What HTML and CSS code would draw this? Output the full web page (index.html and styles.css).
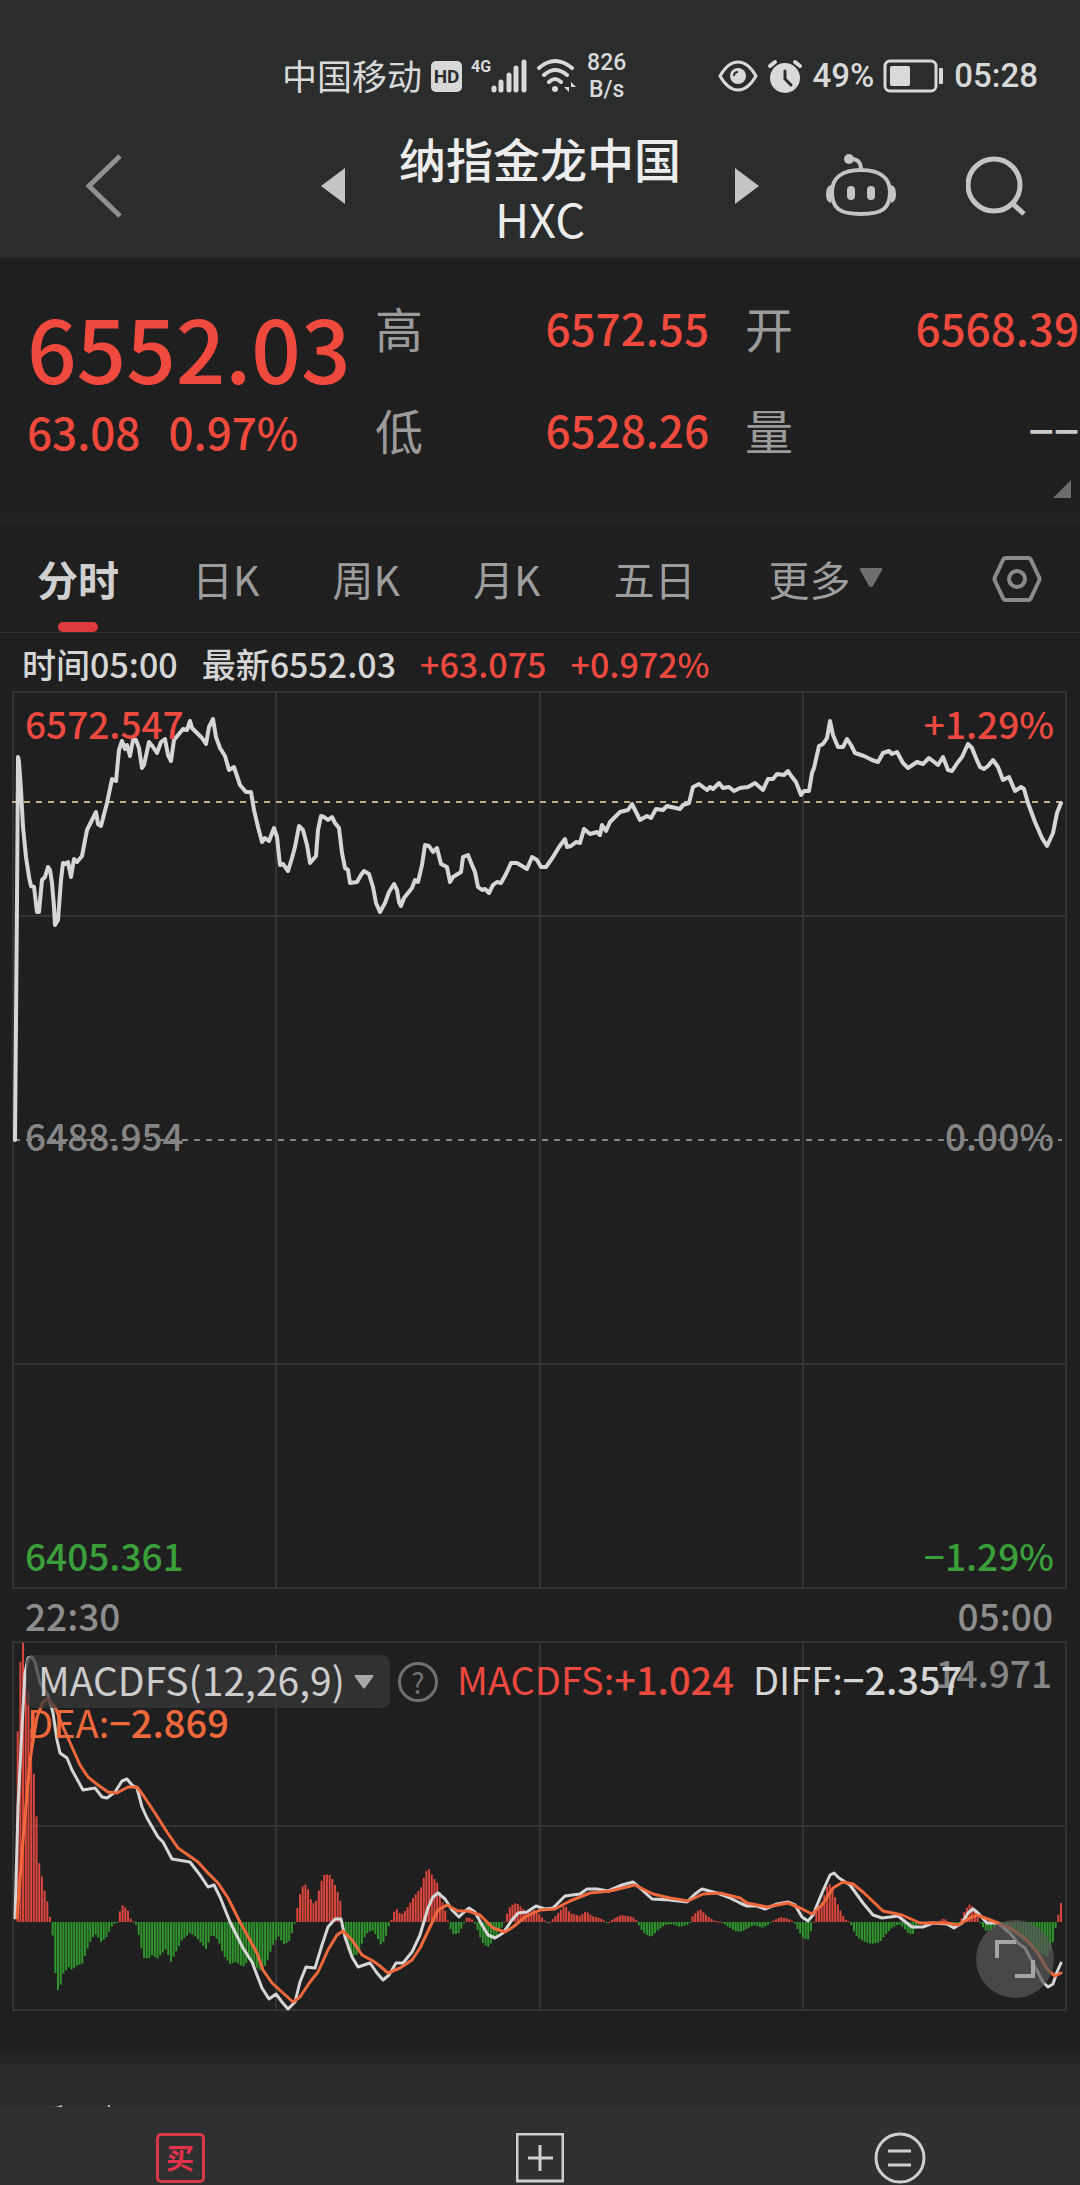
FILE: index.html
```html
<!DOCTYPE html>
<html lang="zh-CN">
<head>
  <meta charset="UTF-8">
  <meta name="viewport" content="width=device-width, initial-scale=1.0">
  <title>纳指金龙中国 HXC</title>
  <link rel="stylesheet" href="styles.css">
</head>
<body>
  <header class="top">
    <div class="status">
      <div class="status-group">
        <span class="carrier">中国移动</span>
        <span class="hd">HD</span>
        <span class="signal">
          <span class="net">4G</span>
          <svg width="36" height="34" viewBox="0 0 36 34" fill="none" stroke="#d8dad9" stroke-width="5" stroke-linecap="round">
            <path d="M3 29v2M10 23v8M18 16v15M25 9v22M33 3v28"/>
          </svg>
        </span>
        <svg width="42" height="36" viewBox="0 0 42 36" fill="none" stroke="#d8dad9" stroke-width="4" stroke-linecap="round">
          <path d="M3 10Q19 -4 36 10M8 17Q19 7 31 17M13 24Q19 18 25 24"/>
          <circle cx="19" cy="31" r="3" fill="#d8dad9" stroke="none"/>
          <path d="M33 24v10l-5-5h5M35 34V24l5 5h-5" fill="#d8dad9" stroke="none"/>
        </svg>
        <span class="speed">826<br>B/s</span>
      </div>
      <div class="status-group">
        <svg width="40" height="32" viewBox="0 0 40 32" fill="none" stroke="#d8dad9" stroke-width="3">
          <path d="M2 16Q10 2 20 2T38 16Q30 30 20 30T2 16Z"/>
          <circle cx="20" cy="16" r="8" fill="#d8dad9" stroke="none"/>
          <path d="M16 16q0-4 4-4" stroke="#2b2d2c" stroke-width="2"/>
        </svg>
        <svg width="36" height="34" viewBox="0 0 36 34" fill="none" stroke-linecap="round">
          <circle cx="18" cy="19" r="15" fill="#d8dad9"/>
          <path d="M3 7l5-4M33 7l-5-4" stroke="#d8dad9" stroke-width="4"/>
          <path d="M18 12v8l6 6" stroke="#2b2d2c" stroke-width="3"/>
        </svg>
        <span class="clock">49%</span>
        <svg width="62" height="34" viewBox="0 0 62 34">
          <rect x="2" y="2" width="51" height="30" rx="5" fill="none" stroke="#d8dad9" stroke-width="3"/>
          <rect x="7" y="7" width="20" height="20" rx="2" fill="#d8dad9"/>
          <rect x="56" y="9" width="4" height="16" rx="1" fill="#d8dad9"/>
        </svg>
        <span class="clock">05:28</span>
      </div>
    </div>

    <nav class="nav">
      <button class="icon-btn back" aria-label="返回">
        <svg width="38" height="64" viewBox="0 0 38 64" fill="none" stroke="#8f9090" stroke-width="5">
          <path d="M35 2L4 32L35 62"/>
        </svg>
      </button>
      <div class="switcher">
        <button class="icon-btn" aria-label="上一个">
          <svg width="24" height="36" viewBox="0 0 24 36"><path d="M24 0v36L0 18z" fill="#c3c5c4"/></svg>
        </button>
        <h1 class="title">纳指金龙中国<span>HXC</span></h1>
        <button class="icon-btn" aria-label="下一个">
          <svg width="24" height="36" viewBox="0 0 24 36"><path d="M0 0v36L24 18z" fill="#c3c5c4"/></svg>
        </button>
      </div>
      <div class="actions">
        <button class="icon-btn" aria-label="助手">
          <svg width="70" height="64" viewBox="0 0 70 64" fill="none" stroke="#c3c5c4" stroke-width="4">
            <path d="M35 16C54 16 64 24 64 38C64 54 57 60 35 60C13 60 6 54 6 38C6 24 16 16 35 16Z"/>
            <path d="M24 5Q35 4 35 16"/>
            <circle cx="23" cy="5" r="5" fill="#c3c5c4" stroke="none"/>
            <path d="M5 31Q0 32 0 40T5 49ZM65 31Q70 32 70 40T65 49Z" fill="#c3c5c4" stroke="none"/>
            <path d="M25 36v6M45 36v6" stroke-width="8" stroke-linecap="round"/>
          </svg>
        </button>
        <button class="icon-btn" aria-label="搜索">
          <svg width="60" height="60" viewBox="0 0 60 60" fill="none" stroke="#c3c5c4" stroke-width="5">
            <circle cx="28" cy="29" r="26"/>
            <path d="M47 48l11 10"/>
          </svg>
        </button>
      </div>
    </nav>
  </header>

  <section class="quote">
    <div class="price">
      <strong>6552.03</strong>
      <p><span>63.08</span><span>0.97%</span></p>
    </div>
    <dl class="stats">
      <div><dt>高</dt><dd>6572.55</dd></div>
      <div><dt>开</dt><dd>6568.39</dd></div>
      <div><dt>低</dt><dd>6528.26</dd></div>
      <div><dt>量</dt><dd class="empty">−−</dd></div>
    </dl>
    <span class="corner"></span>
  </section>

  <main class="board">
    <nav class="tabs">
      <button class="tab active">分时</button>
      <button class="tab">日K</button>
      <button class="tab">周K</button>
      <button class="tab">月K</button>
      <button class="tab">五日</button>
      <button class="tab more">更多<svg width="24" height="20" viewBox="0 0 24 20"><path d="M2 0h20q2 0 1 2L14 18q-2 2-4 0L1 2q-1-2 1-2z" fill="#6f6f6f"/></svg></button>
      <button class="icon-btn setting" aria-label="设置">
        <svg width="50" height="48" viewBox="0 0 50 48" fill="none" stroke="#8b8b8b" stroke-width="4" stroke-linejoin="round">
          <path d="M14 3h22q2 0 3 2l8 17q1 2 0 4l-8 17q-1 2-3 2H14q-2 0-3-2L3 26q-1-2 0-4L11 5q1-2 3-2z"/>
          <circle cx="25" cy="24" r="8"/>
        </svg>
      </button>
    </nav>

    <p class="info">
      <span>时间05:00</span><span>最新6552.03</span><span class="up">+63.075</span><span class="up">+0.972%</span>
    </p>

    <div class="chart">
      <svg id="priceChart" viewBox="0 690 1080 900">
        <g class="grid">
          <path d="M13 692H1066V1588H13ZM13 916H1066M13 1364H1066M276 692V1588M540 692V1588M803 692V1588"/>
        </g>
        <path class="dash-mid" d="M14 1140H1062"/>
        <path class="dash-last" d="M12 802H1062"/>
      </svg>
      <span class="label top-left up">6572.547</span>
      <span class="label top-right up">+1.29%</span>
      <span class="label mid-left">6488.954</span>
      <span class="label mid-right">0.00%</span>
      <span class="label bottom-left down">6405.361</span>
      <span class="label bottom-right down">−1.29%</span>
    </div>

    <div class="times"><span>22:30</span><span>05:00</span></div>

    <div class="chart">
      <svg id="macdChart" viewBox="0 1640 1080 372">
        <g class="grid">
          <path d="M13 1642H1066V2010H13ZM13 1826H1066M276 1642V2010M540 1642V2010M803 1642V2010"/>
        </g>
      </svg>
      <span class="label max">14.971</span>
      <div class="legend">
        <label class="picker">
          <select aria-label="指标"><option>MACDFS(12,26,9)</option></select>
          <svg width="20" height="14" viewBox="0 0 20 14"><path d="M1 0h18q1 0 0 2l-8 11q-1 1-2 0L1 2q-1-2 0-2z" fill="#a8a8a8"/></svg>
        </label>
        <button class="help" aria-label="说明">?</button>
        <span class="value up">MACDFS:<b>+1.024</b></span>
        <span class="value">DIFF:<b>−2.357</b></span>
      </div>
      <span class="dea">DEA:<b>−2.869</b></span>
      <button class="expand" aria-label="全屏">
        <svg width="42" height="42" viewBox="0 0 42 42" fill="none" stroke="#a5a5a5" stroke-width="4">
          <path d="M3 20V4H22M39 22V38H21"/>
        </svg>
      </button>
    </div>
  </main>

  <section class="next-card"></section>

  <footer class="bottom">
    <svg class="peek" width="60" height="3" viewBox="0 0 60 3"><path d="M1 2l4-1 3-1v2zM54 0h2v2h-2z" fill="#bbb"/></svg>
    <button class="icon-btn" aria-label="买"><span class="buy">买</span></button>
    <button class="icon-btn" aria-label="添加">
      <svg width="48" height="50" viewBox="0 0 48 50" fill="none" stroke="#cfcfcf" stroke-width="3">
        <rect x="1" y="1" width="46" height="47"/><path d="M12 25h25M24 12v26"/>
      </svg>
    </button>
    <button class="icon-btn" aria-label="菜单">
      <svg width="52" height="52" viewBox="0 0 52 52" fill="none" stroke="#cfcfcf" stroke-width="3">
        <circle cx="26" cy="26" r="24"/><path d="M14 19h23M14 33h23"/>
      </svg>
    </button>
  </footer>

  <script src="script.js"></script>
</body>
</html>
```

FILE: styles.css
```css
* {
  box-sizing: border-box;
}
body {
  margin: 0;
  background: #1f1f1f;
  color: #d6d6d6;
  font-family: "Noto Sans CJK SC", "Noto Sans", sans-serif;
}
h1, p, dl, dd {
  margin: 0;
}
button, select {
  font-family: inherit;
  color: inherit;
  background: none;
  border: none;
  padding: 0;
  cursor: pointer;
}
b {
  font-weight: 500;
}
svg {
  display: block;
}
.icon-btn {
  display: flex;
  align-items: center;
  justify-content: center;
}
.up {
  color: #ec4a40;
}
.down {
  color: #3a9f3a;
}

/* status bar + title */
.top {
  background: #2b2d2c;
}
.status {
  display: flex;
  justify-content: space-between;
  padding: 44px 42px 0 282px;
  color: #d8dad9;
}
.status-group {
  display: flex;
  align-items: center;
  gap: 9px;
  height: 64px;
}
.carrier {
  font-size: 35px;
  line-height: 60px;
  padding-bottom: 3px;
}
.hd {
  width: 31px;
  height: 31px;
  border-radius: 5px;
  background: #d8dad9;
  color: #2b2d2c;
  font: bold 19px/31px Roboto, sans-serif;
  text-align: center;
}
.signal {
  display: flex;
  align-items: flex-start;
}
.net {
  font: bold 16px/16px Roboto, sans-serif;
}
.speed {
  font: 500 23px/27px Roboto, sans-serif;
  text-align: center;
}
.clock {
  font: 500 33px/40px Roboto, sans-serif;
}
.nav {
  display: grid;
  grid-template-columns: 1fr auto 1fr;
  align-items: center;
  height: 150px;
  padding: 6px 54px 0;
}
.back {
  justify-self: start;
  margin-left: 31px;
}
.switcher {
  display: flex;
  align-items: center;
  gap: 54px;
}
.title {
  padding-top: 4px;
  font-size: 47px;
  font-weight: 500;
  line-height: 60px;
  text-align: center;
  color: #ecedec;
}
.title span {
  display: block;
  font-weight: 400;
}
.actions {
  display: flex;
  align-items: center;
  justify-content: flex-end;
  gap: 70px;
}

/* quote */
.quote {
  position: relative;
  display: flex;
  height: 268px;
  padding: 39px 1px 0 27px;
  border-bottom: 13px solid #232323;
}
.price {
  width: 348px;
  color: #f04a3e;
}
.price strong {
  display: block;
  font-size: 87px;
  font-weight: 500;
  line-height: 98px;
}
.price p {
  display: flex;
  gap: 28px;
  padding-top: 4px;
  font-size: 44px;
  font-weight: 500;
  line-height: 64px;
}
.stats {
  flex: 1;
  display: grid;
  grid-template-columns: 1fr 1fr;
  align-content: start;
  gap: 42px 36px;
  font-size: 44px;
  line-height: 60px;
}
.stats div {
  display: flex;
  justify-content: space-between;
}
.stats dt {
  font-size: 48px;
  color: #9b9b9b;
}
.stats dd {
  font-weight: 500;
  color: #f04a3e;
}
.stats .empty {
  color: #c8c8c8;
}
.corner {
  position: absolute;
  right: 9px;
  bottom: 15px;
  border-left: 18px solid transparent;
  border-bottom: 18px solid #6d6d6d;
}

/* tabs */
.tabs {
  display: flex;
  gap: 73px;
  height: 107px;
  padding: 0 38px 0 37px;
  border-bottom: 1px solid #333;
}
.tab {
  position: relative;
  padding-bottom: 2px;
  font-size: 41px;
  color: #9d9d9d;
}
.tab.active {
  color: #d0d0d0;
  font-weight: bold;
}
.tab.active::after {
  content: "";
  position: absolute;
  left: 50%;
  bottom: 0;
  width: 40px;
  height: 10px;
  margin-left: -20px;
  border-radius: 5px;
  background: #dd3a3d;
}
.more {
  display: flex;
  align-items: center;
  gap: 8px;
}
.setting {
  margin-left: auto;
}
.info {
  display: flex;
  gap: 24px;
  height: 57px;
  padding: 1px 22px 0;
  font-size: 34px;
  font-weight: 500;
  line-height: 60px;
}

/* charts */
.chart {
  position: relative;
}
.chart svg {
  width: 100%;
}
.grid path {
  fill: none;
  stroke: #333;
  stroke-width: 2;
}
.dash-mid, .dash-last {
  stroke: #858585;
  stroke-width: 2;
  stroke-dasharray: 6 6;
}
.dash-last {
  stroke: #c4ad86;
}
.line {
  fill: none;
  stroke: #d6d6d6;
  stroke-width: 4;
  stroke-linejoin: round;
  stroke-linecap: round;
}
.line.thin {
  stroke-width: 3;
}
.line.orange {
  stroke: #f0693c;
}
.bar-up {
  fill: #dc463d;
}
.bar-down {
  fill: #2f952c;
}
.label, .times {
  font-size: 37px;
  font-weight: 500;
  line-height: 44px;
}
.label {
  position: absolute;
}
.top-left, .mid-left, .bottom-left {
  left: 25px;
}
.top-right, .mid-right, .bottom-right {
  right: 26px;
}
.top-left, .top-right {
  top: 11px;
}
.mid-left, .mid-right {
  top: 423px;
  color: #858585;
}
.bottom-left, .bottom-right {
  bottom: 13px;
}
.times {
  display: flex;
  justify-content: space-between;
  height: 50px;
  padding: 3px 27px 0 25px;
  color: #8d8d8d;
}
.max {
  top: 10px;
  right: 28px;
  color: #858585;
}
.legend {
  position: absolute;
  top: 14px;
  left: 26px;
  display: flex;
  align-items: center;
  font-size: 38px;
  line-height: 50px;
  white-space: nowrap;
}
.value {
  padding-bottom: 5px;
  margin-left: 19px;
}
.picker {
  display: flex;
  align-items: center;
  padding: 0 16px 0 12px;
  border-radius: 8px;
  background: rgba(56, 56, 56, 0.75);
}
.picker select {
  appearance: none;
  height: 53px;
  padding-bottom: 4px;
  font-size: 39px;
  line-height: 49px;
  color: #cccccc;
}
.picker svg {
  width: 20px;
  margin-left: 9px;
}
.help {
  width: 40px;
  height: 40px;
  margin-left: 8px;
  border: 3px solid #707070;
  border-radius: 50%;
  font-size: 28px;
  line-height: 32px;
  color: #707070;
}
.dea {
  position: absolute;
  top: 57px;
  left: 27px;
  font-size: 38px;
  line-height: 50px;
  color: #f0693c;
}
.expand {
  position: absolute;
  right: 26px;
  bottom: 14px;
  display: flex;
  align-items: center;
  justify-content: center;
  width: 78px;
  height: 78px;
  border-radius: 50%;
  background: rgba(88, 88, 88, 0.7);
}
.expand svg {
  width: 42px;
}
.board {
  padding-bottom: 39px;
}

/* bottom */
.next-card {
  height: 54px;
  border-top: 13px solid #242424;
  background: #2a2a2a;
}
.bottom {
  position: relative;
  display: grid;
  grid-template-columns: 1fr 1fr 1fr;
  height: 80px;
  padding-top: 25px;
  background: #303030;
}
.peek {
  position: absolute;
  top: 0;
  left: 54px;
}
.buy {
  width: 49px;
  height: 50px;
  border: 3px solid #d63a45;
  border-radius: 5px;
  font-size: 28px;
  font-weight: bold;
  line-height: 42px;
  text-align: center;
  color: #e2334a;
}
```

FILE: script.js
```js
const SVG_NS = "http://www.w3.org/2000/svg";

const price = "15,1140 17,900 18,757 19,762 21,790 23,827 26,857 29,877 31,886 34,887 37,912 39,912 42,880 45,877 48,867 50,870 52,883 54,907 55,925 58,920 61,880 63,863 66,864 68,862 71,877 74,859 77,862 82,856 87,830 92,820 96,812 98,824 101,826 107,803 112,779 116,781 119,750 122,741 125,749 127,745 130,756 133,740 136,740 139,748 142,768 144,765 149,742 153,747 157,753 161,742 165,739 168,755 171,761 174,740 183,729 187,730 190,721 192,728 202,738 206,744 209,727 213,719 216,737 220,748 225,756 229,770 234,767 240,785 246,792 251,792 254,810 258,827 262,842 265,838 269,841 274,828 277,837 280,865 283,864 288,871 292,858 295,847 299,826 303,830 307,845 310,863 316,856 318,830 321,816 324,817 328,820 332,817 335,823 339,828 342,853 345,868 348,870 350,883 357,882 361,875 364,871 369,874 373,887 376,903 380,912 385,903 389,892 394,884 397,890 399,902 401,906 404,898 412,888 415,880 418,882 422,865 425,845 429,846 433,852 437,848 441,864 447,867 450,882 453,877 461,872 463,857 468,855 472,865 475,872 478,887 482,890 485,889 489,893 493,885 497,882 501,883 506,874 511,863 517,863 527,869 532,857 537,860 541,867 546,867 553,857 559,847 565,839 567,847 571,846 576,842 580,843 584,829 590,834 597,832 600,835 602,825 606,831 610,822 620,812 628,810 632,804 636,812 640,820 647,816 651,818 656,809 663,810 667,806 680,809 683,805 689,803 693,787 699,784 707,790 710,787 713,789 719,783 723,788 729,787 734,791 740,788 748,787 755,783 763,790 768,779 773,779 777,774 784,775 788,771 792,777 796,782 801,795 804,791 809,791 812,773 814,768 819,746 823,744 827,738 830,721 833,735 838,747 843,747 847,739 851,745 855,753 864,756 872,760 878,762 883,753 889,751 892,754 897,752 903,763 908,768 917,762 923,764 929,758 938,765 943,757 948,770 952,771 958,762 962,757 968,744 972,748 976,758 980,767 984,769 988,766 993,760 998,767 1003,780 1009,777 1015,791 1021,787 1024,789 1028,803 1035,822 1042,838 1047,846 1053,833 1057,813 1061,803";

const diff = "15,1918 18,1807 22,1727 25,1673 28,1658 32,1657 35,1662 40,1683 48,1695 53,1713 57,1740 60,1753 67,1758 72,1770 83,1790 95,1788 102,1797 107,1798 115,1792 122,1781 127,1779 132,1785 137,1788 142,1807 147,1818 158,1837 163,1842 172,1859 190,1862 200,1875 208,1887 214,1885 220,1897 230,1922 243,1948 252,1962 262,1988 269,1999 276,1994 282,2002 288,2009 295,2002 300,1982 306,1967 315,1968 322,1945 328,1927 335,1919 341,1919 345,1937 352,1957 358,1967 370,1963 377,1973 383,1980 389,1975 396,1963 403,1963 412,1952 420,1935 428,1908 433,1897 438,1893 445,1899 452,1910 459,1917 463,1913 469,1908 475,1912 482,1925 488,1935 495,1938 503,1933 512,1920 518,1913 527,1912 536,1906 545,1909 553,1908 565,1896 580,1894 587,1889 597,1889 608,1891 622,1885 633,1882 640,1888 652,1899 670,1900 687,1902 695,1894 702,1889 717,1893 728,1897 740,1903 747,1906 757,1906 765,1909 777,1904 788,1902 795,1905 802,1917 808,1921 813,1915 822,1893 830,1875 834,1873 839,1878 850,1885 863,1903 873,1915 882,1918 898,1916 912,1927 923,1927 933,1923 947,1924 954,1928 962,1923 968,1913 973,1909 978,1913 987,1923 998,1923 1010,1933 1018,1943 1025,1948 1033,1963 1043,1982 1048,1987 1053,1984 1057,1972 1061,1963";

const dea = "17,1918 23,1840 30,1760 37,1717 43,1702 48,1699 55,1707 63,1727 72,1747 80,1765 88,1777 98,1785 108,1792 117,1793 128,1787 137,1787 143,1795 155,1813 167,1832 178,1848 198,1862 208,1873 218,1883 228,1898 240,1922 257,1953 263,1970 272,1983 283,1993 293,2002 300,1997 310,1982 318,1972 328,1950 337,1935 343,1931 352,1940 362,1955 373,1961 380,1966 388,1973 400,1968 412,1960 420,1948 430,1927 438,1910 447,1905 458,1911 468,1911 480,1915 493,1928 505,1932 513,1927 525,1917 540,1910 555,1909 570,1901 590,1893 610,1891 635,1885 653,1894 670,1898 688,1901 703,1894 720,1893 740,1898 747,1903 767,1907 788,1903 800,1908 812,1914 822,1905 833,1888 843,1882 853,1884 863,1892 883,1911 902,1915 920,1923 947,1923 958,1925 970,1918 977,1915 993,1921 1010,1928 1027,1940 1037,1952 1048,1970 1055,1976 1061,1973";

// histogram shape: x,height above (+) or below (-) the zero line
const hist = "15,90 17,171 20,257 23,280 26,248 29,225 31,195 34,145 37,98 39,60 42,45 45,29 48,18 50,5 53,-16 55,-49 58,-68 61,-62 63,-52 69,-45 72,-48 76,-44 82,-42 87,-28 91,-18 95,-12 98,-15 101,-20 106,-16 110,-8 113,-2 117,-1 119,8 122,17 126,14 129,10 131,2 134,0 137,-4 141,-25 144,-36 149,-37 151,-32 157,-37 166,-27 171,-40 176,-30 182,-18 190,-11 196,-15 206,-27 212,-12 218,-18 224,-34 230,-42 236,-40 243,-45 249,-38 253,-42 262,-50 267,-40 272,-25 278,-14 284,-22 289,-20 294,-5 296,6 299,24 302,35 305,38 308,33 311,22 315,17 318,28 321,40 324,47 329,48 333,42 337,32 340,24 342,8 345,-15 348,-28 352,-33 356,-34 360,-26 366,-12 372,-8 376,-13 381,-23 385,-18 388,-6 391,0 393,8 396,14 401,7 406,12 413,24 422,36 425,50 429,53 433,45 438,38 441,25 444,15 447,6 449,-4 453,-12 458,-12 463,-4 466,4 468,5 473,2 476,-4 480,-15 484,-23 489,-25 493,-18 498,-12 502,-5 505,2 509,14 514,19 518,18 522,14 528,9 534,12 539,8 544,2 549,-1 553,3 559,10 565,17 570,9 580,6 586,11 592,6 600,4 605,1 608,-1 613,3 621,7 633,5 637,1 640,-6 645,-12 651,-15 657,-9 665,-3 672,-2 680,-5 687,-3 691,1 693,7 700,13 705,8 710,4 715,1 722,0 727,-4 737,-10 743,-9 750,-5 755,-3 762,-6 768,-3 774,2 781,5 789,3 794,0 798,-8 803,-16 808,-18 812,-6 816,10 822,20 827,35 830,38 834,28 838,17 842,8 846,2 850,0 853,-8 858,-16 865,-20 872,-22 880,-20 886,-12 892,-6 899,-2 904,-6 909,-12 913,-12 918,-3 924,-1 930,1 938,0 944,4 948,0 955,-2 960,0 965,12 970,18 974,14 978,4 981,-3 986,-9 992,-8 997,-2 1003,0 1010,-8 1020,-16 1030,-24 1040,-32 1048,-34 1053,-20 1056,-4 1058,6 1061,19";

const ZERO = 1922;
const MINUTES = 390;

function add(parent, tag, attrs) {
  const el = document.createElementNS(SVG_NS, tag);
  for (const key in attrs) {
    el.setAttribute(key, attrs[key]);
  }
  parent.appendChild(el);
}

function heightAt(shape, x) {
  for (let i = 1; i < shape.length; i++) {
    if (x <= shape[i][0]) {
      const [x0, h0] = shape[i - 1];
      const [x1, h1] = shape[i];
      return h0 + (h1 - h0) * (x - x0) / (x1 - x0);
    }
  }
  return shape[shape.length - 1][1];
}

const priceChart = document.getElementById("priceChart");
add(priceChart, "polyline", { class: "line", points: price });

const macdChart = document.getElementById("macdChart");
const shape = hist.split(" ").map(p => p.split(",").map(Number));
const step = (1061 - 15) / (MINUTES - 1);
for (let i = 1; i < MINUTES; i++) {
  const x = 15 + i * step;
  const h = heightAt(shape, x);
  add(macdChart, "rect", {
    class: h > 0 ? "bar-up" : "bar-down",
    x: (x - 1).toFixed(2),
    y: h > 0 ? ZERO - h : ZERO,
    width: 2,
    height: Math.max(Math.abs(h), 1)
  });
}
add(macdChart, "polyline", { class: "line thin", points: diff });
add(macdChart, "polyline", { class: "line thin orange", points: dea });
```
